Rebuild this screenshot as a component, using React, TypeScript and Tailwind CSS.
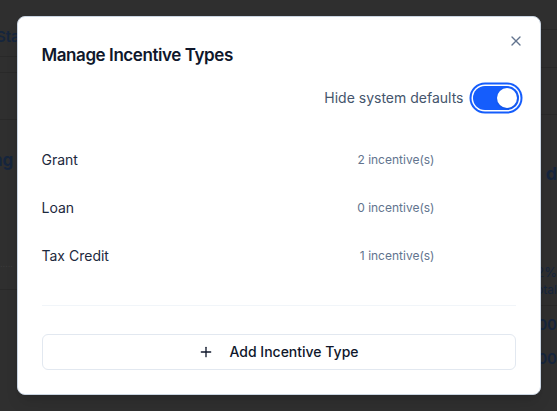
import { X, Plus } from 'lucide-react'
import { useState } from 'react'

const types = [
  { name: 'Grant', count: 2 },
  { name: 'Loan', count: 0 },
  { name: 'Tax Credit', count: 1 },
]

export default function App() {
  const [hideDefaults, setHideDefaults] = useState(true)

  return (
    <div className="relative h-[411px] w-full overflow-hidden bg-[#2f2f2f] font-['Inter',sans-serif]">
      {/* dimmed page behind the dialog */}
      <div className="flex h-full justify-between text-[#15253d]">
        <div className="w-[40px]">
          <div className="-ml-[4px] mt-[26px] text-[15px] font-semibold">Stati</div>
          <div className="mt-[7px] border-t border-[#292929]" />
          <div className="mt-[15px] border-t border-[#292929]" />
          <div className="mt-[46px] border-t border-[#292929]" />
          <div className="-ml-[8px] mt-[28px] text-[17px] font-bold">ng I</div>
          <div className="mt-[84px] text-[9px] text-[#3a3a3a]">.....</div>
          <div className="mt-[18px] border-t border-[#292929]" />
        </div>
        <div className="flex w-[40px] flex-col items-end">
          <div className="mt-[29px] w-full border-t border-[#292929]" />
          <div className="mt-[37px] w-full border-t border-[#292929]" />
          <div className="mt-[46px] w-full border-t border-[#292929]" />
          <div className="mt-[45px] text-[18px] font-bold">d</div>
          <div className="mt-[76px] text-[13px]">2%</div>
          <div className="text-[12px] leading-[14px]">otal</div>
          <div className="mt-[8px] w-full border-t border-[#292929]" />
          <div className="mt-[8px] text-[15px] font-semibold">00</div>
          <div className="mt-[12px] text-[15px] font-semibold">00</div>
        </div>
      </div>

      <div className="absolute inset-0 flex items-center justify-center">
        <div className="relative w-[524px] rounded-lg border border-slate-300 bg-white px-6 pb-6 pt-6 shadow-lg">
          <button className="absolute right-4 top-4 text-slate-500 hover:text-slate-700">
            <X className="h-4 w-4" strokeWidth={2} />
          </button>

          <h2 className="text-[17px] font-semibold leading-7 tracking-tight text-slate-900">Manage Incentive Types</h2>

          <div className="mt-[17px] flex items-center justify-end gap-[9px]">
            <span className="text-sm text-slate-600">Hide system defaults</span>
            <button
              onClick={() => setHideDefaults(v => !v)}
              className={`-mr-[3px] flex h-6 w-[46px] items-center rounded-full px-[2px] ring-2 ring-blue-600 ring-offset-[1.5px] ${hideDefaults ? 'justify-end bg-blue-600' : 'justify-start bg-slate-300'}`}
            >
              <span className="h-5 w-5 rounded-full bg-white shadow" />
            </button>
          </div>

          <div className="mt-[26px]">
            {types.map(t => (
              <div key={t.name} className="flex h-12 items-center">
                <span className="flex-1 text-sm text-slate-800">{t.name}</span>
                <span className="text-xs text-slate-500">{t.count} incentive(s)</span>
                <div className="w-[81px]" />
              </div>
            ))}
          </div>

          <div className="mt-[25px] border-t border-slate-100" />

          <button className="mt-[28px] flex h-9 w-full items-center justify-center gap-[15px] rounded-md border border-slate-200 bg-white text-sm font-medium text-slate-900">
            <Plus className="h-4 w-4" strokeWidth={2} />
            Add Incentive Type
          </button>
        </div>
      </div>
    </div>
  )
}
